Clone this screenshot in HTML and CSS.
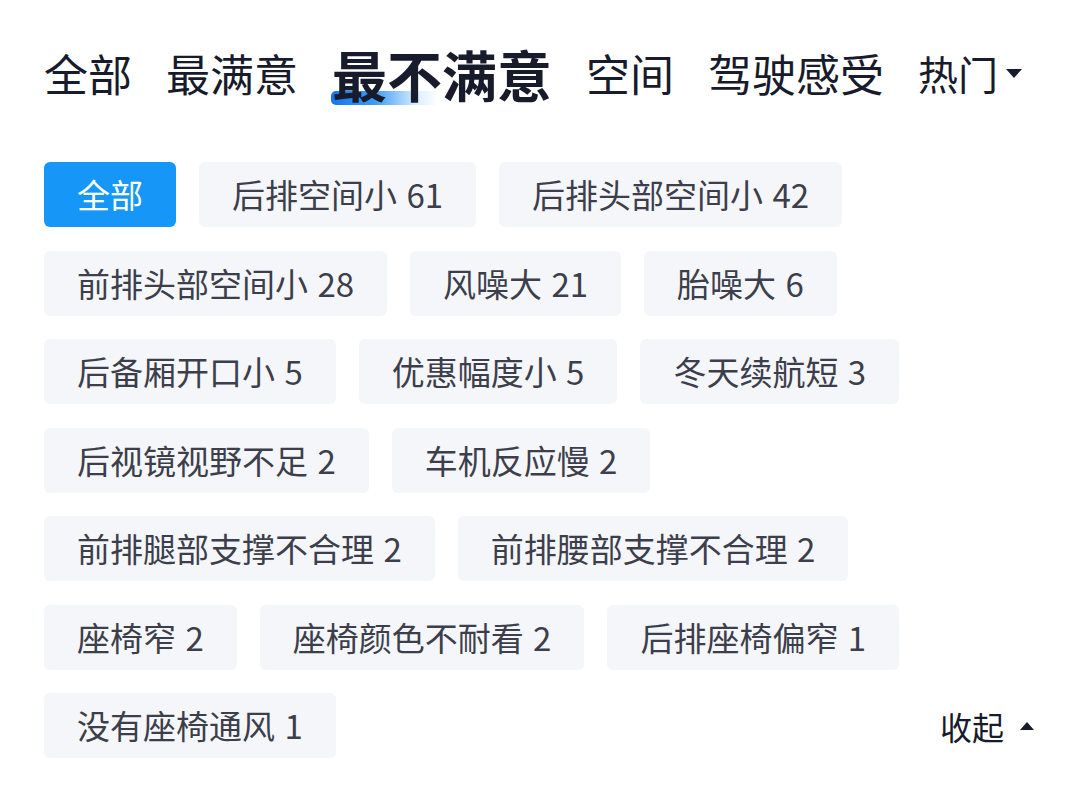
FILE: index.html
```html
<html>

<head>
  <meta charset="utf-8">
  <link rel="stylesheet" href="styles.css">
</head>

<body>
  <div class="container">
    <div class="tabs">
      <div class="tab">全部</div>
      <div class="tab">最满意</div>
      <div class="tab tab-active">最不满意</div>
      <div class="tab">空间</div>
      <div class="tab">驾驶感受</div>
      <div class="tab tab-sort">热门<span class="caret caret-down"></span></div>
    </div>
    <div class="tags">
      <div class="tag tag-active">全部</div>
      <div class="tag">后排空间小 61</div>
      <div class="tag">后排头部空间小 42</div>
      <div class="tag">前排头部空间小 28</div>
      <div class="tag">风噪大 21</div>
      <div class="tag">胎噪大 6</div>
      <div class="tag">后备厢开口小 5</div>
      <div class="tag">优惠幅度小 5</div>
      <div class="tag">冬天续航短 3</div>
      <div class="tag">后视镜视野不足 2</div>
      <div class="tag">车机反应慢 2</div>
      <div class="tag">前排腿部支撑不合理 2</div>
      <div class="tag">前排腰部支撑不合理 2</div>
      <div class="tag">座椅窄 2</div>
      <div class="tag">座椅颜色不耐看 2</div>
      <div class="tag">后排座椅偏窄 1</div>
      <div class="tag">没有座椅通风 1</div>
      <div class="collapse">收起<span class="caret caret-up"></span></div>
    </div>
  </div>
</body>

</html>
```

FILE: styles.css
```css
* {
  margin: 0;
  padding: 0;
  box-sizing: border-box;
}

body {
  background: #fff;
  font-family: "Noto Sans CJK SC", "Noto Sans", sans-serif;
}

.container {
  width: 1080px;
  padding: 0 44px;
}

/* top tab bar */
.tabs {
  display: flex;
  align-items: center;
  gap: 34px;
  height: 146px;
  color: #171b2c;
}

.tab {
  font-size: 44px;
  line-height: 1;
  position: relative;
  z-index: 0;
}

.tab-active {
  font-size: 55px;
  font-weight: 700;
}

.tab-active::before {
  content: "";
  position: absolute;
  left: -1px;
  top: 45px;
  width: 108px;
  height: 14px;
  border-radius: 5px 0 0 5px;
  background: linear-gradient(90deg, #1674ee 0%, #3a9bf7 40%, rgba(120, 190, 255, 0.25) 80%, rgba(255, 255, 255, 0) 100%);
  z-index: -1;
}

.tab-sort {
  display: flex;
  align-items: center;
  gap: 8px;
  font-size: 40px;
}

.caret {
  display: inline-block;
  width: 0;
  height: 0;
  border-left: 8px solid transparent;
  border-right: 8px solid transparent;
}

.caret-down {
  border-top: 9px solid #171b2c;
}

.caret-up {
  border-bottom: 8px solid #171b2c;
  border-left-width: 7px;
  border-right-width: 7px;
}

/* tag chips */
.tags {
  display: flex;
  flex-wrap: wrap;
  align-items: center;
  column-gap: 23px;
  row-gap: 23.5px;
  margin-top: 16px;
}

.tag {
  height: 65px;
  padding: 0 33px;
  border-radius: 6px;
  background: #f5f6fa;
  color: #3c3f4b;
  font-size: 33px;
  line-height: 65px;
  word-spacing: 2px;
  white-space: nowrap;
}

.tag-active {
  background: #1697f7;
  color: #fff;
}

.collapse {
  margin-left: auto;
  display: flex;
  align-items: center;
  gap: 16px;
  font-size: 32px;
  color: #171b2c;
  padding-right: 2px;
}
```
